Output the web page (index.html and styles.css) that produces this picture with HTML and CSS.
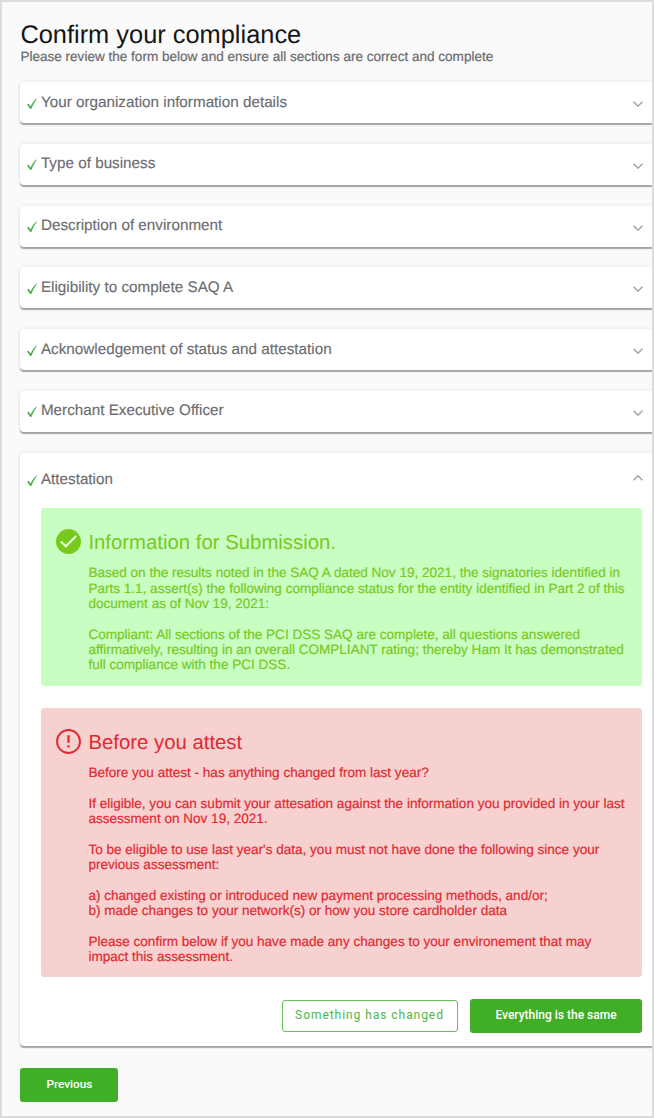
FILE: index.html
```html
<!DOCTYPE html>
<html lang="en">
<head>
<meta charset="utf-8">
<title>Confirm your compliance</title>
<link rel="stylesheet" href="styles.css">
</head>
<body>
<svg class="sprite" aria-hidden="true">
  <symbol id="tick" viewBox="0 0 12 13"><path d="M1 7.6 2.5 6.8 4.6 9.6C6 6.2 8 3.4 11 1L10.2 3C8.2 5.6 6.9 8.2 5.5 11.8L4.2 12Z"/></symbol>
  <symbol id="chevron" viewBox="0 0 10 6"><path d="M.6.8 5 5.2 9.4.8" fill="none" stroke="currentColor" stroke-width="1.4"/></symbol>
</svg>
<main class="page">
  <h1 class="title">Confirm your compliance</h1>
  <p class="subtitle">Please review the form below and ensure all sections are correct and complete</p>
  <div class="panels">
    <section class="panel"><svg class="tick"><use href="#tick"/></svg><h2 class="name">Your organization information details</h2><svg class="chevron"><use href="#chevron"/></svg></section>
    <section class="panel"><svg class="tick"><use href="#tick"/></svg><h2 class="name">Type of business</h2><svg class="chevron"><use href="#chevron"/></svg></section>
    <section class="panel"><svg class="tick"><use href="#tick"/></svg><h2 class="name">Description of environment</h2><svg class="chevron"><use href="#chevron"/></svg></section>
    <section class="panel"><svg class="tick"><use href="#tick"/></svg><h2 class="name">Eligibility to complete SAQ A</h2><svg class="chevron"><use href="#chevron"/></svg></section>
    <section class="panel"><svg class="tick"><use href="#tick"/></svg><h2 class="name">Acknowledgement of status and attestation</h2><svg class="chevron"><use href="#chevron"/></svg></section>
    <section class="panel"><svg class="tick"><use href="#tick"/></svg><h2 class="name">Merchant Executive Officer</h2><svg class="chevron"><use href="#chevron"/></svg></section>
  </div>
  <section class="open-panel">
    <div class="open-head"><svg class="tick"><use href="#tick"/></svg><h2 class="name">Attestation</h2><svg class="chevron up"><use href="#chevron"/></svg></div>
    <div class="notice success">
      <svg class="notice-icon" viewBox="0 0 24 24"><circle cx="12" cy="12" r="12" fill="currentColor"/><path d="M4.6 12 9.4 16.6 19.4 6.8" fill="none" stroke="#e0ffd5" stroke-width="2.1"/></svg>
      <div class="notice-text">
        <h3 class="notice-title">Information for Submission.</h3>
        <p>Based on the results noted in the SAQ A dated Nov 19, 2021, the signatories identified in<br>Parts 1.1, assert(s) the following compliance status for the entity identified in Part 2 of this<br>document as of Nov 19, 2021:</p>
        <p>Compliant: All sections of the PCI DSS SAQ are complete, all questions answered<br>affirmatively, resulting in an overall COMPLIANT rating; thereby Ham It has demonstrated<br>full compliance with the PCI DSS.</p>
      </div>
    </div>
    <div class="notice danger">
      <svg class="notice-icon" viewBox="0 0 24 24"><circle cx="12" cy="12" r="11" fill="none" stroke="currentColor" stroke-width="1.9"/><path d="M12 6v7.2M12 15.6v2.2" stroke="currentColor" stroke-width="2.2"/></svg>
      <div class="notice-text">
        <h3 class="notice-title">Before you attest</h3>
        <p>Before you attest - has anything changed from last year?</p>
        <p>If eligible, you can submit your attesation against the information you provided in your last<br>assessment on Nov 19, 2021.</p>
        <p>To be eligible to use last year's data, you must not have done the following since your<br>previous assessment:</p>
        <p>a) changed existing or introduced new payment processing methods, and/or;<br>b) made changes to your network(s) or how you store cardholder data</p>
        <p>Please confirm below if you have made any changes to your environement that may<br>impact this assessment.</p>
      </div>
    </div>
    <div class="actions">
      <button class="btn outline">Something has changed</button>
      <button class="btn solid">Everything is the same</button>
    </div>
  </section>
  <button class="btn solid previous">Previous</button>
</main>
</body>
</html>
```
FILE: styles.css
```css
* { box-sizing: border-box; }
body { margin: 0; font-family: "Liberation Sans", Arial, sans-serif; text-rendering: geometricPrecision; }
h1, h2, h3, p { margin: 0; font-weight: 400; white-space: nowrap; }
.sprite { display: none; }
.page {
  width: 654px;
  height: 1118px;
  padding: 18px 0 0 18.4px;
  border: 2px solid #dcdcdc;
  background: #fafafa;
  overflow: hidden;
}
.title { font-size: 25.4px; line-height: 30px; color: #151515; }
.subtitle { font-size: 13.56px; line-height: 16px; margin-top: -1px; color: #6b6b6e; -webkit-text-stroke: .2px; }
.panels { display: flex; flex-direction: column; gap: 20.8px; margin-top: 17px; }
.panel, .open-panel {
  background: #fff;
  border-radius: 4px 0 0 4px;
  box-shadow: 0 1.2px 1px rgba(0, 0, 0, .32), 0 0 5px rgba(0, 0, 0, .09);
}
.panel, .open-head { display: flex; align-items: center; padding: 0 9.5px 0 6px; }
.panel { height: 41px; }
.tick { width: 12px; height: 13px; margin-top: 1px; fill: #49b04c; flex: none; }
.name { flex: 1; margin: 0 0 0 2.5px; font-size: 15.25px; line-height: 20px; color: #6c6c70; -webkit-text-stroke: .15px; }
.chevron { width: 10px; height: 6px; margin-top: 3px; color: #a0a0a0; flex: none; }
.chevron.up { transform: rotate(180deg); margin-top: -5px; }
.open-panel { height: 593px; margin-top: 21px; }
.open-head { height: 55px; }
.notice { display: flex; width: 601.5px; margin-left: 20.2px; padding: 22px 0 0 15.5px; border-radius: 3px; }
.success { height: 178px; background: #c9fec3; color: #77ca1d; }
.danger { height: 269px; margin-top: 22px; background: #f7d1d0; color: #e02a32; }
.notice-icon { width: 25px; height: 25px; flex: none; margin-top: -1px; }
.notice-text { margin-left: 7.3px; }
.notice-title { font-size: 20.35px; line-height: 26px; margin-bottom: 9.5px; }
.notice p { font-size: 13.55px; line-height: 15.3px; margin-bottom: 15.3px; -webkit-text-stroke: .2px; }
.actions { display: flex; justify-content: flex-end; align-items: center; gap: 12.5px; margin-top: 22px; padding-right: 10px; }
.btn { padding: 0; border: 0; border-radius: 3px; font: 500 12px/16px Roboto, "Liberation Sans", sans-serif; white-space: nowrap; }
.solid { width: 172px; height: 34px; background: #41ae28; color: #fff; padding-bottom: 1px; }
.outline { width: 176px; height: 32px; border: 1.5px solid #69c05a; background: #fff; color: #4db648; font-weight: 400; letter-spacing: .95px; padding-bottom: 2px; }
.previous { display: block; width: 98px; margin-top: 22px; font-size: 11.8px; }
```
